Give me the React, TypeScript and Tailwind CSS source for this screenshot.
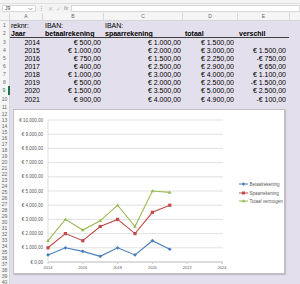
import React from 'react';

const rows = [
  ['2014', '€ 500,00', '€ 1.000,00', '€ 1.500,00', ''],
  ['2015', '€ 1.000,00', '€ 2.000,00', '€ 3.000,00', '€ 1.500,00'],
  ['2016', '€ 750,00', '€ 1.500,00', '€ 2.250,00', '-€ 750,00'],
  ['2017', '€ 400,00', '€ 2.500,00', '€ 2.900,00', '€ 650,00'],
  ['2018', '€ 1.000,00', '€ 3.000,00', '€ 4.000,00', '€ 1.100,00'],
  ['2019', '€ 500,00', '€ 2.000,00', '€ 2.500,00', '-€ 1.500,00'],
  ['2020', '€ 1.500,00', '€ 3.500,00', '€ 5.000,00', '€ 2.500,00'],
  ['2021', '€ 900,00', '€ 4.000,00', '€ 4.900,00', '-€ 100,00'],
];

const betaal = [500, 1000, 750, 400, 1000, 500, 1500, 900];
const spaar = [1000, 2000, 1500, 2500, 3000, 2000, 3500, 4000];
const totaal = [1500, 3000, 2250, 2900, 4000, 2500, 5000, 4900];

const px = (i: number) => 34 + i * 17.4;
const py = (v: number) => 152 - v * 0.0142;

function RowNum({ n, active }: { n: number; active?: boolean }) {
  return (
    <div
      className={`flex w-[10px] shrink-0 items-center justify-center border-r bg-[#f5f5f5] text-[5px] leading-none ${
        active ? 'border-r-2 border-[#217346] text-[#217346]' : 'border-[#d6d6d6] text-[#666]'
      }`}
    >
      {n}
    </div>
  );
}

function Chart() {
  const line = (vals: number[]) => vals.map((v, i) => `${px(i)},${py(v)}`).join(' ');
  return (
    <div className="absolute left-[13px] top-[109px] h-[165px] w-[272px] border border-[#bfbfbf] bg-white shadow-[1px_1px_1px_rgba(0,0,0,0.15)]">
      <svg width="272" height="165" className="block" fontFamily="'Liberation Sans', Arial, sans-serif">
        {Array.from({ length: 11 }, (_, k) => (
          <g key={k}>
            <line x1={34} x2={209} y1={py(k * 1000)} y2={py(k * 1000)} stroke="#d9d9d9" strokeWidth={0.8} />
            <text x={29} y={py(k * 1000) + 1.5} fontSize={4.5} fill="#595959" textAnchor="end">
              {k === 0 ? '€ 0,00' : `€ ${k}.000,00`}
            </text>
          </g>
        ))}
        <line x1={34} x2={34} y1={py(10000)} y2={py(0)} stroke="#d9d9d9" strokeWidth={0.8} />
        <line x1={34} x2={209} y1={py(0)} y2={py(0)} stroke="#bfbfbf" strokeWidth={0.8} />
        {[0, 2, 4, 6, 8, 10].map((i) => (
          <g key={i}>
            <line x1={px(i)} x2={px(i)} y1={py(0)} y2={py(0) + 2} stroke="#bfbfbf" strokeWidth={0.8} />
            <text x={px(i)} y={159} fontSize={4} fill="#595959" textAnchor="middle">
              {2014 + i}
            </text>
          </g>
        ))}

        <polyline points={line(betaal)} fill="none" stroke="#4a7ebb" strokeWidth={1.1} />
        {betaal.map((v, i) => (
          <rect key={i} x={px(i) - 1.3} y={py(v) - 1.3} width={2.6} height={2.6} fill="#4a7ebb" transform={`rotate(45 ${px(i)} ${py(v)})`} />
        ))}
        <polyline points={line(spaar)} fill="none" stroke="#be4b48" strokeWidth={1.1} />
        {spaar.map((v, i) => (
          <rect key={i} x={px(i) - 1.6} y={py(v) - 1.6} width={3.2} height={3.2} fill="#be4b48" />
        ))}
        <polyline points={line(totaal)} fill="none" stroke="#98b954" strokeWidth={1.1} />
        {totaal.map((v, i) => (
          <polygon key={i} points={`${px(i)},${py(v) - 2} ${px(i) - 1.8},${py(v) + 1.3} ${px(i) + 1.8},${py(v) + 1.3}`} fill="#98b954" />
        ))}

        {[
          { y: 74, c: '#4a7ebb', t: 'Betaalrekening', m: 'd' },
          { y: 83, c: '#be4b48', t: 'Spaarrekening', m: 's' },
          { y: 91, c: '#98b954', t: 'Totaal vermogen', m: 't' },
        ].map((l) => (
          <g key={l.t}>
            <line x1={225} x2={234} y1={l.y} y2={l.y} stroke={l.c} strokeWidth={1} />
            {l.m === 'd' && <rect x={228.3} y={l.y - 1.2} width={2.4} height={2.4} fill={l.c} transform={`rotate(45 229.5 ${l.y})`} />}
            {l.m === 's' && <rect x={228} y={l.y - 1.5} width={3} height={3} fill={l.c} />}
            {l.m === 't' && <polygon points={`229.5,${l.y - 1.8} 227.8,${l.y + 1.2} 231.2,${l.y + 1.2}`} fill={l.c} />}
            <text x={235.5} y={l.y + 1.6} fontSize={4.5} fill="#595959">
              {l.t}
            </text>
          </g>
        ))}
      </svg>
    </div>
  );
}

export default function App() {
  const cell = 'flex items-center overflow-hidden whitespace-nowrap';
  return (
    <div className="relative h-[284px] w-[300px] overflow-hidden bg-white font-['Liberation_Sans',Arial,sans-serif] text-black">
      {/* ribbon remnant */}
      <div className="h-[4px] border-b border-[#e1e1e1] bg-[#f3f3f3]" />

      {/* formula bar */}
      <div className="flex h-[9px] items-center bg-[#f3f3f3] text-[#777]">
        <div className="ml-[2px] flex h-[7px] w-[34px] items-center justify-between rounded-[1px] border border-[#d9d9d9] bg-white px-[2px]">
          <span className="text-[5px] leading-none text-[#333]">J9</span>
          <svg width="5" height="4" viewBox="0 0 5 4">
            <path d="M0.6 1 L2.5 3 L4.4 1" fill="none" stroke="#777" strokeWidth="0.7" />
          </svg>
        </div>
        <span className="ml-[3px] text-[5px] leading-none">⋮</span>
        <span className="ml-[4px] text-[6px] leading-none text-[#bbb]">✕</span>
        <span className="ml-[3px] text-[6px] leading-none text-[#bbb]">✓</span>
        <span className="ml-[3px] text-[5px] italic leading-none">fx</span>
        <div className="ml-[3px] h-[7px] flex-1 border border-[#d9d9d9] bg-white" />
      </div>

      {/* column headers */}
      <div className="flex h-[8px] border-b border-[#d6d6d6] bg-[#f5f5f5] text-[5px] leading-none text-[#666]">
        <div className="w-[10px] shrink-0 border-r border-[#d6d6d6]" />
        <div className="flex w-[33px] items-center justify-center border-r border-[#d6d6d6]">A</div>
        <div className="flex w-[61px] items-center justify-center border-r border-[#d6d6d6]">B</div>
        <div className="flex w-[79px] items-center justify-center border-r border-[#d6d6d6]">C</div>
        <div className="flex w-[55px] items-center justify-center border-r border-[#d6d6d6]">D</div>
        <div className="flex w-[52px] items-center justify-center border-r border-[#d6d6d6]">E</div>
        <div className="flex-1" />
      </div>

      {/* sheet */}
      <div className="text-[7px] leading-none">
        <div className="flex h-[8px]">
          <RowNum n={1} />
          <div className="flex flex-1 bg-[#e4dfec]">
            <div className={`${cell} w-[33px] pl-[1px]`}>reknr:</div>
            <div className={`${cell} w-[61px] pl-[2px]`}>IBAN:</div>
            <div className={`${cell} w-[79px] pl-[1px]`}>IBAN:</div>
          </div>
        </div>
        <div className="flex h-[9px]">
          <RowNum n={2} />
          <div className="flex flex-1 bg-[#e4dfec] font-bold">
            <div className="flex w-[279px] border-b border-[#404040]">
              <div className={`${cell} w-[33px] pl-[1px]`}>Jaar</div>
              <div className={`${cell} w-[61px] pl-[2px]`}>betaalrekening</div>
              <div className={`${cell} w-[79px] pl-[1px]`}>spaarrekening</div>
              <div className={`${cell} w-[55px] pl-[2px]`}>totaal</div>
              <div className={`${cell} w-[51px] pl-[1px]`}>verschil</div>
            </div>
          </div>
        </div>
        {rows.map((r, i) => (
          <div key={r[0]} className={`flex ${i === 6 ? 'h-[9px]' : 'h-[8px]'}`}>
            <RowNum n={i + 3} active={i === 6} />
            <div className="flex flex-1 bg-[#e4dfec]">
              <div className={`${cell} w-[33px] justify-end pr-[3px]`}>{r[0]}</div>
              <div className={`${cell} w-[61px] justify-end pr-[3px]`}>{r[1]}</div>
              <div className={`${cell} w-[79px] justify-end pr-[2px]`}>{r[2]}</div>
              <div className={`${cell} w-[55px] justify-end pr-[4px]`}>{r[3]}</div>
              <div className={`${cell} w-[52px] justify-end pr-[4px]`}>{r[4]}</div>
            </div>
          </div>
        ))}
        <div className="flex h-[8px]">
          <RowNum n={11} />
          <div className="flex-1 bg-[#e4dfec]" />
        </div>
        {Array.from({ length: 29 }, (_, k) => (
          <div key={k} className="flex h-[6px]">
            <RowNum n={k + 12} />
            <div className="flex-1 bg-[#e4dfec]" />
          </div>
        ))}
      </div>

      <Chart />
    </div>
  );
}
